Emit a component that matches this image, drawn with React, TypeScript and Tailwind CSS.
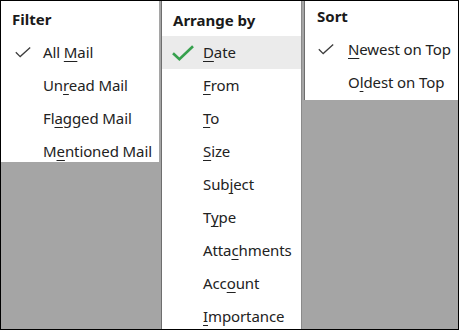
import React from "react";

type Item = { pre: string; u: string; post: string };

const font = { fontFamily: '"Noto Sans", "Open Sans", sans-serif' };

function Label({ item }: { item: Item }) {
  return (
    <span className="whitespace-nowrap tracking-[-0.1px]">
      {item.pre}
      <u className="underline underline-offset-[3px] decoration-1">{item.u}</u>
      {item.post}
    </span>
  );
}

function ThinCheck() {
  return (
    <svg width="16" height="11" viewBox="0 0 16 11" className="block">
      <path d="M0.8 5.2 L5.2 9.6 L15.2 0.6" fill="none" stroke="#3c3c3c" strokeWidth="1.3" />
    </svg>
  );
}

function GreenCheck() {
  return (
    <svg width="22" height="16" viewBox="0 0 22 16" className="block">
      <path d="M1 8.2 L7.4 14.2 L21 1.2" fill="none" stroke="#36a04d" strokeWidth="2.6" />
    </svg>
  );
}

const filterItems: Item[] = [
  { pre: "All ", u: "M", post: "ail" },
  { pre: "Un", u: "r", post: "ead Mail" },
  { pre: "Fl", u: "a", post: "gged Mail" },
  { pre: "M", u: "e", post: "ntioned Mail" },
];

const arrangeItems: Item[] = [
  { pre: "", u: "D", post: "ate" },
  { pre: "", u: "F", post: "rom" },
  { pre: "", u: "T", post: "o" },
  { pre: "", u: "S", post: "ize" },
  { pre: "Sub", u: "j", post: "ect" },
  { pre: "T", u: "y", post: "pe" },
  { pre: "Atta", u: "c", post: "hments" },
  { pre: "Acc", u: "o", post: "unt" },
  { pre: "", u: "I", post: "mportance" },
];

const sortItems: Item[] = [
  { pre: "", u: "N", post: "ewest on Top" },
  { pre: "O", u: "l", post: "dest on Top" },
];

export default function App() {
  return (
    <div
      className="w-[459px] h-[330px] border border-black bg-[#a5a5a5] flex items-start text-[15px] text-[#222222] box-border"
      style={font}
    >
      {/* Filter */}
      <div className="w-[158px] h-[161px] bg-white overflow-hidden shrink-0">
        <div className="h-[35px] pt-[8px] pl-[11px] font-bold leading-[20px] text-[#1a1a1a]">Filter</div>
        {filterItems.map((it, i) => (
          <div key={i} className="h-[33px] flex items-center">
            <div className="w-[42px] pl-[14px] flex items-center">{i === 0 ? <ThinCheck /> : null}</div>
            <Label item={it} />
          </div>
        ))}
      </div>
      <div className="w-[2px] shrink-0" />
      {/* Arrange by */}
      <div className="w-[141px] self-stretch bg-white overflow-hidden shrink-0 border-l border-r border-l-[#6e6e6e] border-r-[#8a8a8a]">
        <div className="h-[35px] pt-[9px] pl-[11px] font-bold leading-[20px] text-[#1a1a1a]">Arrange by</div>
        {arrangeItems.map((it, i) => (
          <div key={i} className={i === 0 ? "h-[33px] flex items-center bg-[#ebebeb]" : "h-[33px] flex items-center"}>
            <div className="w-[41px] pl-[10px] flex items-center">{i === 0 ? <GreenCheck /> : null}</div>
            <Label item={it} />
          </div>
        ))}
      </div>
      <div className="w-[2px] shrink-0" />
      {/* Sort */}
      <div className="w-[154px] h-[99px] bg-white overflow-hidden shrink-0 border-l border-l-[#6e6e6e]">
        <div className="h-[32px] pt-[5px] pl-[12px] font-bold leading-[20px] text-[#1a1a1a]">Sort</div>
        {sortItems.map((it, i) => (
          <div key={i} className="h-[33px] flex items-center">
            <div className="w-[43px] pl-[13px] flex items-center">{i === 0 ? <ThinCheck /> : null}</div>
            <Label item={it} />
          </div>
        ))}
      </div>
    </div>
  );
}
